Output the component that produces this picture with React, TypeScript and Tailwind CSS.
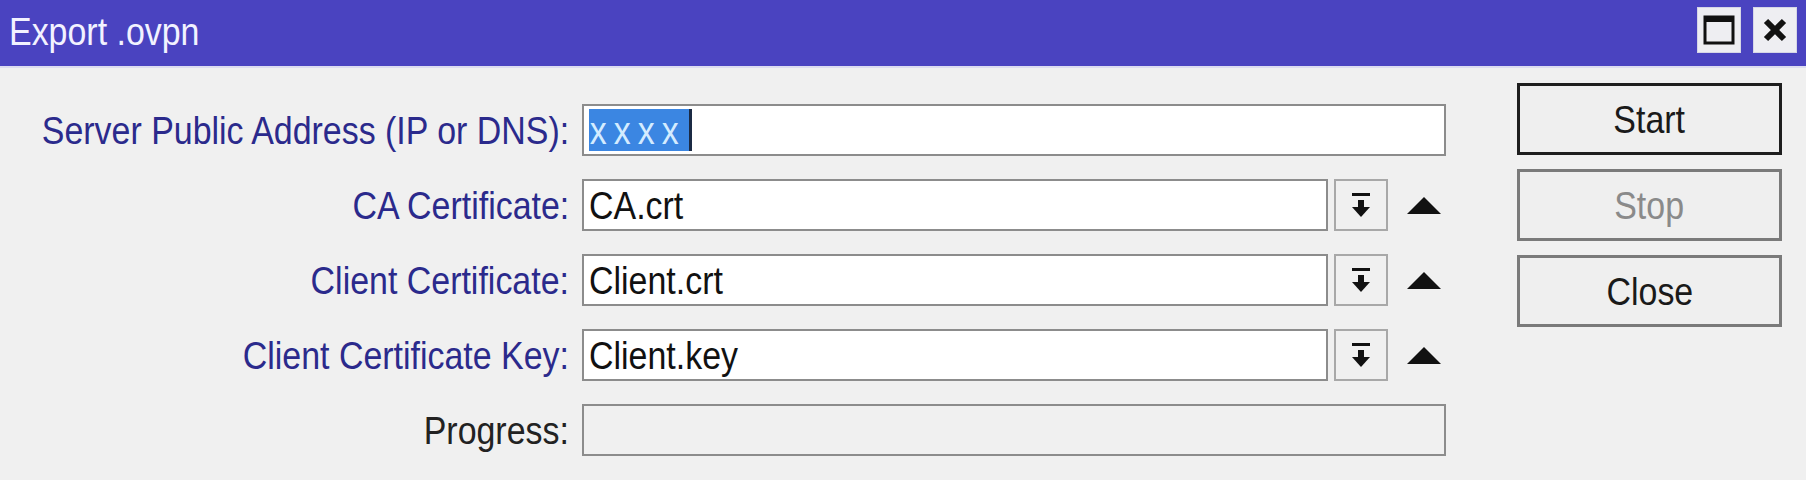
import React from "react";

const font = { fontFamily: '"Liberation Sans", Arial, sans-serif' };

// the dialog text is tall and narrow, so squeeze a larger size
const Txt: React.FC<{
  children: React.ReactNode;
  origin?: string;
  className?: string;
}> = ({ children, origin = "origin-left", className = "" }) => (
  <span
    className={`inline-block shrink-0 whitespace-nowrap scale-x-[0.87] ${origin} ${className}`}
  >
    {children}
  </span>
);

const Field: React.FC<{ children?: React.ReactNode; muted?: boolean }> = ({
  children,
  muted,
}) => (
  <div
    className={`h-[52px] flex-1 flex items-center pl-[5px] border-2 border-[#8c8c8c] ${
      muted ? "bg-[#f0f0f0]" : "bg-white"
    }`}
  >
    {children}
  </div>
);

const DropButton: React.FC = () => (
  <div className="h-[52px] w-[54px] ml-[6px] flex items-center justify-center border-2 border-[#a8a8a8] bg-[#f0f0f0]">
    <svg width="22" height="28" viewBox="0 0 22 28">
      <rect x="2" y="2" width="18" height="3" fill="#111" />
      <rect x="8" y="9" width="6" height="8" fill="#111" />
      <path d="M2 16 L20 16 L11 26 Z" fill="#111" />
    </svg>
  </div>
);

const UpArrow: React.FC = () => (
  <div className="w-[58px] flex items-center justify-end pr-[5px]">
    <svg width="34" height="17" viewBox="0 0 34 17">
      <path d="M17 0 L34 17 L0 17 Z" fill="#111" />
    </svg>
  </div>
);

const Row: React.FC<{
  label: string;
  dark?: boolean;
  children: React.ReactNode;
}> = ({ label, dark, children }) => (
  <div className="flex items-center h-[52px]">
    <div
      className={`w-[570px] flex justify-end pr-[1px] ${
        dark ? "text-[#222]" : "text-[#2b2a8c]"
      }`}
    >
      <Txt origin="origin-right">{label}</Txt>
    </div>
    <div className="w-[12px]" />
    <div className="w-[864px] flex items-center">{children}</div>
  </div>
);

const WinButton: React.FC<{ children: React.ReactNode }> = ({ children }) => (
  <div className="w-[44px] h-[46px] flex items-center justify-center bg-[#eeeef2] border border-[#d6d6e6]">
    {children}
  </div>
);

const DlgButton: React.FC<{
  label: string;
  primary?: boolean;
  disabled?: boolean;
}> = ({ label, primary, disabled }) => (
  <button
    className={`h-[72px] w-[265px] flex items-center justify-center bg-[#efefef] ${
      primary
        ? "border-[3px] border-[#1e1e1e]"
        : "border-[3px] border-[#7a7a7a]"
    } ${disabled ? "text-[#8a8a8a]" : "text-[#1a1a1a]"}`}
  >
    <Txt origin="origin-center">{label}</Txt>
  </button>
);

export default function App() {
  return (
    <div
      className="w-[1806px] h-[480px] bg-[#f0f0f0] text-[39px] leading-none overflow-hidden"
      style={font}
    >
      <div className="h-[68px] bg-[#4a43c0] flex items-center justify-between pl-[9px] pr-[9px] border-b-2 border-[#dcdcf0]">
        <Txt className="text-[#f2f2ff] -mt-[4px]">Export .ovpn</Txt>
        <div className="flex gap-[12px] -mt-[6px]">
          <WinButton>
            <svg width="32" height="30" viewBox="0 0 32 30">
              <rect
                x="2"
                y="2"
                width="28"
                height="26"
                fill="none"
                stroke="#111"
                strokeWidth="3"
              />
              <rect x="2" y="2" width="28" height="5" fill="#111" />
            </svg>
          </WinButton>
          <WinButton>
            <svg width="26" height="26" viewBox="0 0 26 26">
              <path
                d="M4 4 L22 22 M22 4 L4 22"
                stroke="#111"
                strokeWidth="6"
              />
            </svg>
          </WinButton>
        </div>
      </div>

      <div className="flex">
        <div className="flex flex-col gap-[23px] pt-[36px]">
          <Row label="Server Public Address (IP or DNS):">
            <Field>
              <span className="flex items-center">
                <span className="bg-[#3b86e2] text-[#d4ecff] h-[42px] w-[100px] flex items-center">
                  <Txt className="tracking-[8px] pl-[1px]">xxxx</Txt>
                </span>
                <span className="w-[3px] h-[42px] bg-[#1b2a44]" />
              </span>
            </Field>
          </Row>
          <Row label="CA Certificate:">
            <Field>
              <Txt className="text-[#111]">CA.crt</Txt>
            </Field>
            <DropButton />
            <UpArrow />
          </Row>
          <Row label="Client Certificate:">
            <Field>
              <Txt className="text-[#111]">Client.crt</Txt>
            </Field>
            <DropButton />
            <UpArrow />
          </Row>
          <Row label="Client Certificate Key:">
            <Field>
              <Txt className="text-[#111]">Client.key</Txt>
            </Field>
            <DropButton />
            <UpArrow />
          </Row>
          <Row label="Progress:" dark>
            <Field muted />
          </Row>
        </div>

        <div className="flex flex-col gap-[14px] pt-[15px] ml-[71px]">
          <DlgButton label="Start" primary />
          <DlgButton label="Stop" disabled />
          <DlgButton label="Close" />
        </div>
      </div>
    </div>
  );
}
